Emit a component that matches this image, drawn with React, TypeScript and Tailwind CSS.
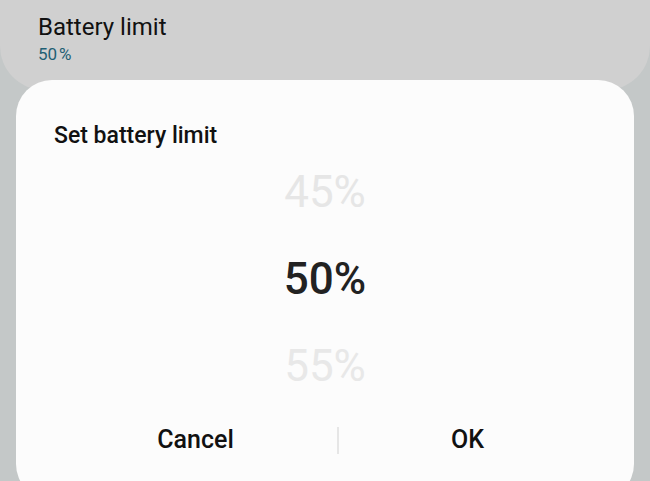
export default function App() {
  return (
    <div className="relative h-[481px] w-[650px] overflow-hidden bg-[#c4c8c8] font-['Roboto',sans-serif]">
      <div className="h-[90px] rounded-b-[44px] bg-[#d0d0d0] px-[38px] pt-[12px]">
        <p className="text-[24px] leading-[30px] text-[#111]">Battery limit</p>
        <p className="text-[17px] leading-[24px] text-[#1f5f74]">
          <span className="mr-[2px]">50</span>%
        </p>
      </div>
      <div className="mx-[16px] -mt-[10px] h-[420px] rounded-[36px] bg-[#fcfcfc]">
        <h2 className="pl-[38px] pt-[42px] text-[23px] font-medium leading-[28px] text-[#111]">
          Set battery limit
        </h2>
        <div className="mt-[17px] flex flex-col items-center">
          <span className="h-[87px] text-[44px] leading-[50px] text-[#e6e6e6]">45%</span>
          <span className="h-[87px] text-[44px] font-medium leading-[50px] text-[#222]">50%</span>
          <span className="h-[84px] text-[44px] leading-[50px] text-[#e8e8e8]">55%</span>
        </div>
        <div className="flex items-center px-[38px]">
          <button className="w-[283px] text-center text-[25px] font-medium leading-[30px] text-[#111]">
            Cancel
          </button>
          <div className="h-[27px] w-[2px] bg-[#e6e6e6]" />
          <button className="flex-1 text-center text-[25px] font-medium leading-[30px] text-[#111]">
            OK
          </button>
        </div>
      </div>
    </div>
  );
}
